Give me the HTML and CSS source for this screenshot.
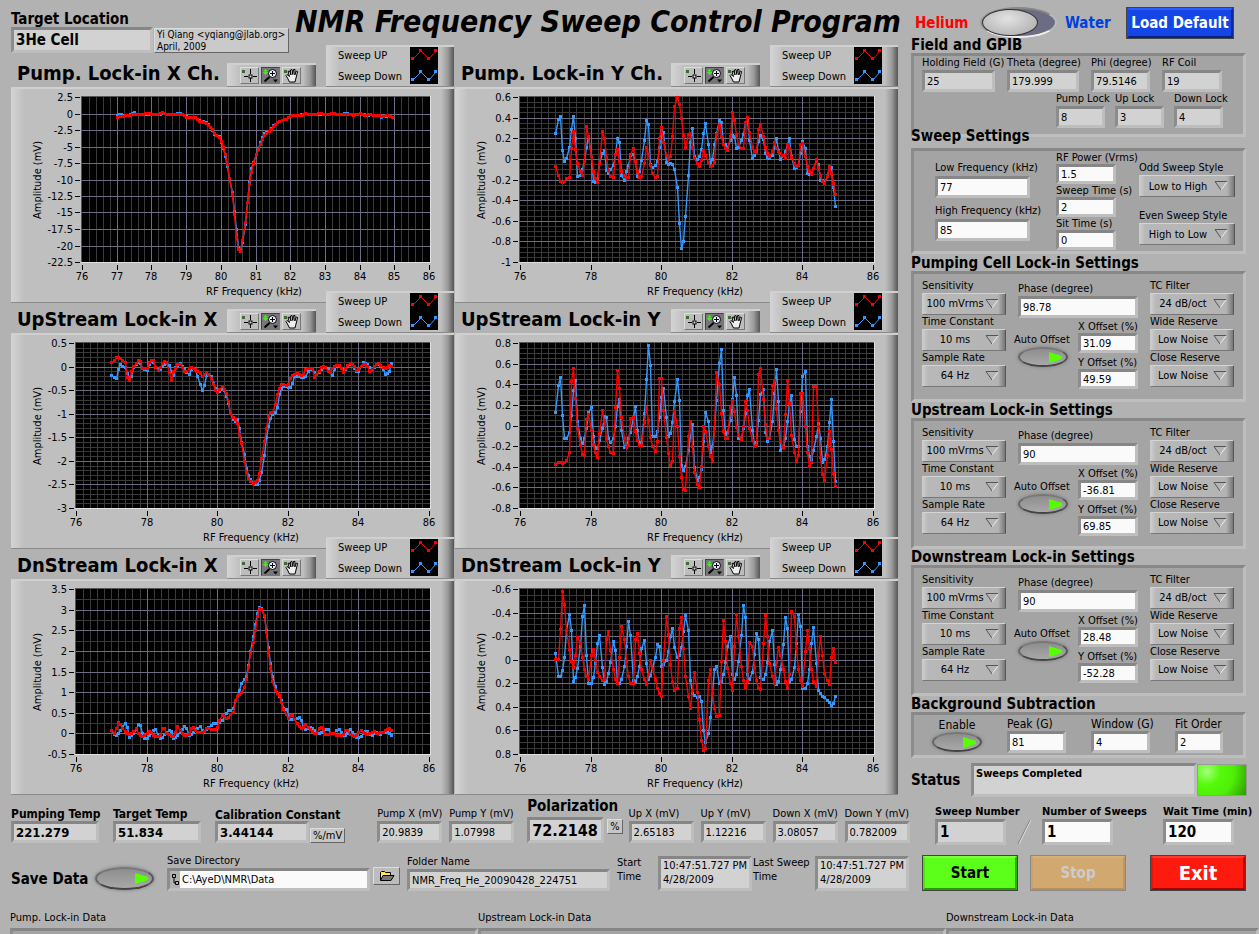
FILE: index.html
```html
<!DOCTYPE html>
<html lang="en">

<head>
  <meta charset="UTF-8" />
  <meta name="viewport" content="width=device-width, initial-scale=1.0" />
  <title>NMR Frequency Sweep Control Program</title>
  <link rel="stylesheet" href="styles.css">
</head>

<body>
  <svg class="sprite" aria-hidden="true">
    <symbol id="icon-cross" viewBox="0 0 17 15">
      <rect x="1" y="2" width="3" height="3" fill="#3f6a35" />
      <path d="M9.500 1v5M9.500 10v4M3 8.500h4M12 8.500h4" stroke="#000" fill="none" />
      <rect x="8" y="7" width="3" height="3" fill="#ddd" stroke="#000" />
    </symbol>
    <symbol id="icon-zoom" viewBox="0 0 17 15">
      <path d="M3.500 1v6M1 4.500h6M2 2l3 4M5 2l-3 4" stroke="#4be62c" fill="none" />
      <circle cx="10.500" cy="5.500" r="4" fill="#e8e8ff" stroke="#000" />
      <path d="M10.500 3v5M8 5.500h5" stroke="#000" fill="none" />
      <path d="M7.500 9l-5 4.500" stroke="#000" stroke-width="2" />
      <path d="M11 11.500h5l-2.500 3z" fill="#000" />
    </symbol>
    <symbol id="icon-hand" viewBox="1 1 17 15">
      <rect x="2" y="3" width="3" height="3" fill="#3f6a35" />
      <path d="M7.500 15l-2-4-1.500-2.500 1-1 2.500 2-1.500-5 1.500-.5 1.500 4-.5-5 1.500-.5.8 5 .7-5h1.500l-.2 5.500 1.500-4 1.300.5-1.600 6.500-1 4z" fill="#eee" stroke="#000" stroke-linejoin="round" />
    </symbol>
    <symbol id="icon-legend" viewBox="0 0 28 37">
      <rect width="28" height="37" fill="#000" />
      <path d="M3 12l8-8 8 8 7-8" stroke="#f00" fill="none" />
      <path d="M1 10h3v3h-3zM9 2h3v3h-3zM17 10h3v3h-3zM24 2h3v3h-3z" fill="#f00" />
      <path d="M3 33l8-8 8 8 7-8" stroke="#39f" fill="none" />
      <path d="M1 31h3v3h-3zM9 23h3v3h-3zM17 31h3v3h-3zM24 23h3v3h-3z" fill="#39f" />
    </symbol>
  </svg>

  <div class="page">
    <main class="left">
      <header class="top">
        <label class="field location">Target Location
          <input type="text" value="3He Cell" readonly />
        </label>
        <div class="author">Yi Qiang &lt;yqiang@jlab.org&gt;<br>April, 2009</div>
        <h1>NMR Frequency Sweep Control Program</h1>
      </header>

      <div class="charts" id="charts"></div>

      <div class="readouts">
        <label class="field strong w88">Pumping Temp <input type="text" value="221.279" readonly /></label>
        <label class="field strong w88">Target Temp <input type="text" value="51.834" readonly /></label>
        <label class="field strong calib">Calibration Constant <input type="text" value="3.44144" readonly /></label>
        <span class="unit">%/mV</span>
        <label class="field w65 pump">Pump X (mV) <input type="text" value="20.9839" readonly /></label>
        <label class="field w65">Pump Y (mV) <input type="text" value="1.07998" readonly /></label>
        <label class="field polar">Polarization <input type="text" value="72.2148" readonly /></label>
        <span class="unit percent">%</span>
        <label class="field w65">Up X (mV) <input type="text" value="2.65183" readonly /></label>
        <label class="field w65">Up Y (mV) <input type="text" value="1.12216" readonly /></label>
        <label class="field w65">Down X (mV) <input type="text" value="3.08057" readonly /></label>
        <label class="field w65">Down Y (mV) <input type="text" value="0.782009" readonly /></label>
      </div>

      <div class="save-row">
        <label class="save-data">Save Data <input type="checkbox" class="led big" checked /></label>
        <div class="path">
          <label for="saveDir">Save Directory</label>
          <div class="path-box">
            <svg width="10" height="17" viewBox="0 0 10 17" aria-hidden="true">
              <path d="M2.500 3.500h3v3h-3zM5.500 10.500h3v3h-3zM4 7v5h1" fill="none" stroke="#000" />
            </svg>
            <input type="text" id="saveDir" value="C:\AyeD\NMR\Data" />
          </div>
        </div>
        <button type="button" class="browse" aria-label="Browse">
          <svg width="16" height="12" viewBox="0 0 16 12" aria-hidden="true">
            <path d="M1.500 10V2.500l1-1h3l1 1h5V5" fill="#ffe94a" stroke="#000" />
            <path d="M1.500 10.500L4 5.500h11l-3 5z" fill="#777" stroke="#000" />
          </svg>
        </button>
        <label class="field folder">Folder Name <input type="text" value="NMR_Freq_He_20090428_224751" readonly /></label>
        <label class="time" for="startTime">Start<br>Time</label>
        <output class="stamp" id="startTime">10:47:51.727 PM<br>4/28/2009</output>
        <label class="time last" for="lastTime">Last Sweep<br>Time</label>
        <output class="stamp" id="lastTime">10:47:51.727 PM<br>4/28/2009</output>
      </div>
    </main>

    <aside class="right">
      <div class="mode">
        <label for="cellMode" class="helium">Helium</label>
        <input type="checkbox" id="cellMode" class="switch" />
        <label for="cellMode" class="water">Water</label>
        <button type="button" class="btn blue">Load Default</button>
      </div>

      <h2>Field and GPIB</h2>
      <section class="panel gpib">
        <div class="gpib-top">
          <label class="field">Holding Field (G) <input type="text" value="25" readonly /></label>
          <label class="field">Theta (degree) <input type="text" value="179.999" readonly /></label>
          <label class="field">Phi (degree) <input type="text" value="79.5146" readonly /></label>
          <label class="field">RF Coil <input type="text" value="19" readonly /></label>
        </div>
        <div class="gpib-locks">
          <label class="field">Pump Lock <input type="text" value="8" readonly /></label>
          <label class="field">Up Lock <input type="text" value="3" readonly /></label>
          <label class="field">Down Lock <input type="text" value="4" readonly /></label>
        </div>
      </section>

      <h2 class="overlap">Sweep Settings</h2>
      <section class="panel sweep">
        <div class="freqs">
          <label class="field">Low Frequency (kHz) <input type="text" value="77" /></label>
          <label class="field">High Frequency (kHz) <input type="text" value="85" /></label>
        </div>
        <div class="times">
          <label class="field">RF Power (Vrms) <input type="text" value="1.5" /></label>
          <label class="field">Sweep Time (s) <input type="text" value="2" /></label>
          <label class="field">Sit Time (s) <input type="text" value="0" /></label>
        </div>
        <div class="styles">
          <label class="field">Odd Sweep Style
            <select><option>Low to High</option><option>High to Low</option></select>
          </label>
          <label class="field">Even Sweep Style
            <select><option>High to Low</option><option>Low to High</option></select>
          </label>
        </div>
      </section>

      <div id="lockins"></div>

      <h2>Background Subtraction</h2>
      <section class="panel background">
        <label class="enable">Enable <input type="checkbox" class="led" checked /></label>
        <label class="field">Peak (G) <input type="text" value="81" /></label>
        <label class="field">Window (G) <input type="text" value="4" /></label>
        <label class="field">Fit Order <input type="text" value="2" /></label>
      </section>

      <div class="status">
        <h2>Status</h2>
        <output class="status-text">Sweeps Completed</output>
        <span class="status-light"></span>
      </div>

      <div class="run">
        <label class="field">Sweep Number <input type="text" value="1" readonly /></label>
        <svg class="slash" width="14" height="26" viewBox="0 0 14 26" aria-hidden="true">
          <path d="M1 25L13 1" stroke="#777" />
          <path d="M2 25L14 1" stroke="#ddd" />
        </svg>
        <label class="field">Number of Sweeps <input type="text" value="1" /></label>
        <label class="field wait">Wait Time (min) <input type="text" value="120" /></label>
      </div>

      <div class="actions">
        <button type="button" class="btn green">Start</button>
        <button type="button" class="btn tan" disabled>Stop</button>
        <button type="button" class="btn red">Exit</button>
      </div>
    </aside>
  </div>

  <footer class="data">
    <label>Pump. Lock-in Data <textarea readonly></textarea></label>
    <label>Upstream Lock-in Data <textarea readonly></textarea></label>
    <label>Downstream Lock-in Data <textarea readonly></textarea></label>
  </footer>

  <script src="panel.js"></script>
</body>

</html>
```
FILE: styles.css
```css
* {
  box-sizing: border-box;
}

body {
  margin: 0;
  overflow: hidden;
  background: #b2b2b2;
  color: #000;
  font-family: Tahoma, "DejaVu Sans Condensed", "DejaVu Sans", sans-serif;
  font-size: 11px;
  line-height: 14px;
}

h1,
h2,
h3 {
  margin: 0;
  font-weight: bold;
  white-space: nowrap;
}

h2 {
  position: relative;
  font-size: 15px;
  line-height: 16px;
}

input,
select,
button,
textarea {
  margin: 0;
  font: inherit;
  color: inherit;
}

.sprite {
  display: none;
}

.page {
  display: flex;
  padding: 0 3px 0 11px;
}

.left {
  flex: 1;
  min-width: 0;
}

.right {
  flex: 0 0 345px;
  margin-left: 2px;
}

/* label above a sunken box */
.field {
  display: block;
  white-space: nowrap;
}

.field input {
  display: block;
  width: 100%;
  height: 22px;
  padding: 0 2px;
}

input[type="text"],
.stamp,
.status-text,
.data textarea {
  border: 3px solid;
  border-color: #868686 #bebebe #bebebe #8c8c8c;
  border-radius: 0;
  background: #fafafa;
  outline: none;
}

input[readonly],
.stamp,
.status-text {
  background: #d2d2d2;
}

select {
  display: block;
  appearance: none;
  width: 84px;
  height: 22px;
  padding: 0 20px 0 2px;
  border: 1px solid;
  border-color: #d4d4d4 #555 #777 #ccc;
  border-radius: 0;
  text-align: center;
  background:
    url("data:image/svg+xml,%3Csvg xmlns='http://www.w3.org/2000/svg' width='14' height='10'%3E%3Cpath d='M13 1L7 9' stroke='%23eee'/%3E%3Cpath d='M13 .5H1L7 9' fill='none' stroke='%23555'/%3E%3C/svg%3E") no-repeat right 6px center,
    linear-gradient(90deg, #ccc 0, #b8b8b8 5px, #b4b4b4 calc(100% - 7px), #777 100%);
}

.w88 {
  width: 88px;
}

.w65 {
  width: 65px;
}

/* header */
.top {
  display: flex;
  height: 45px;
}

.location {
  flex: none;
  width: 142px;
  padding-top: 12px;
  font-size: 15px;
  line-height: 15px;
  font-weight: bold;
}

.location input {
  height: 26px;
}

.author {
  flex: none;
  height: 25px;
  width: 135px;
  margin: 28px 0 0 1px;
  padding: 0 2px;
  border: 1px solid;
  border-color: #ddd #666 #666 #ddd;
  background: #cacaca;
  font-size: 10px;
  line-height: 12px;
  white-space: nowrap;
}

.top h1 {
  margin: 3px 0 0 6px;
  font-size: 30px;
  line-height: 38px;
  font-style: italic;
}

/* charts */
.charts {
  display: grid;
  grid-template-columns: 1fr 1fr;
  column-gap: 1px;
  margin-right: 11px;
}

.chart + .chart + .chart {
  margin-top: -12px;
}

.chart-head {
  display: flex;
  align-items: flex-end;
  height: 42px;
  padding-left: 6px;
}

.chart-head h3 {
  flex: 0 0 210px;
  font-size: 20px;
  line-height: 28px;
}

.raised {
  border-top: 2px solid #d0d0d0;
  border-bottom: 1px solid #8a8a8a;
  background: linear-gradient(90deg, #d4d4d4 0, #c8c8c8 8px, #bfbfbf 13px, #bfbfbf calc(100% - 13px), #999 calc(100% - 6px), #555 100%);
}

.tools {
  display: flex;
  gap: 2px;
  width: 89px;
  height: 24px;
  padding: 2px 13px;
}

.tools button {
  width: 19px;
  height: 17px;
  padding: 0;
  border: 1px solid;
  border-color: #ddd #777 #777 #ddd;
  background: #bdbdbd;
}

.tools button.active {
  background: #777;
  border-color: #444 #777 #777 #444;
}

.tools svg {
  display: block;
  width: 17px;
  height: 15px;
}

.legend {
  position: relative;
  display: flex;
  justify-content: space-between;
  width: 128px;
  height: 42px;
  margin-left: auto;
  padding: 0 16px 0 12px;
}

.legend ul {
  margin: 0;
  padding: 0;
  list-style: none;
  line-height: 21px;
  margin-top: -2px;
}

.legend svg {
  width: 28px;
  height: 37px;
}

.plot {
  min-height: 216px;
}

.plot svg {
  display: block;
  width: 100%;
  margin-top: -2px;
}

.plot text {
  font-size: 11px;
}

/* bottom readouts */
.readouts {
  display: flex;
  align-items: flex-end;
  height: 48px;
}

.readouts > * {
  flex: none;
  margin-right: 7px;
}

.readouts .strong {
  margin-right: 14px;
  font-size: 12px;
  font-weight: bold;
}

.readouts .strong input {
  font-size: 13px;
}

.readouts .calib {
  width: 94px;
  margin-right: 1px;
  line-height: 12px;
}

.readouts .pump {
  margin-left: 25px;
}

.readouts .polar {
  width: 77px;
  margin: 0 3px 0 6px;
  font-size: 15px;
  line-height: 21px;
  font-weight: bold;
}

.readouts .polar input {
  height: 26px;
  font-size: 16px;
}

.unit {
  padding: 0 2px;
  border: 1px solid;
  border-color: #ddd #666 #666 #ddd;
  background: #c6c6c6;
  line-height: 13px;
}

.readouts .percent {
  margin: 0 6px 9px 0;
}

.save-row {
  display: flex;
  align-items: flex-end;
  height: 48px;
}

.save-row > * {
  flex: none;
}

.save-data {
  display: flex;
  align-items: center;
  justify-content: space-between;
  width: 143px;
  margin: 0 13px 1px 0;
  font-size: 15px;
  font-weight: bold;
}

.path {
  width: 203px;
}

.path-box {
  display: flex;
  height: 23px;
  border: 3px solid;
  border-color: #868686 #bebebe #bebebe #8c8c8c;
  background: #b2b2b2;
}

.path-box input {
  flex: 1;
  min-width: 0;
  border: 0;
  padding: 0 2px;
}

.browse {
  width: 27px;
  height: 18px;
  margin: 0 7px 6px 3px;
  padding: 0;
  border: 1px solid;
  border-color: #ddd #666 #666 #ddd;
  background: #bdbdbd;
}

.browse svg {
  display: block;
  margin: 0 auto;
}

.folder {
  width: 203px;
}

.time {
  width: 41px;
  margin-left: 7px;
  padding-bottom: 7px;
  white-space: nowrap;
}

.time.last {
  width: 62px;
  margin-left: 1px;
}

.stamp {
  width: 94px;
  height: 35px;
  padding: 0 2px;
  white-space: nowrap;
}

/* checkboxes */
.led {
  appearance: none;
  width: 50px;
  height: 20px;
  border: 2px solid;
  border-color: #777 #555 #444 #666;
  border-radius: 50%;
  background: linear-gradient(#8e8e8e, #a8a8a8);
  box-shadow: 0 0 3px 1px #8c8c8c;
}

.led:checked {
  background:
    url("data:image/svg+xml,%3Csvg xmlns='http://www.w3.org/2000/svg' width='14' height='11'%3E%3Cpath d='M0 0L13 4V7L0 11z' fill='%235f0'/%3E%3C/svg%3E") no-repeat right 3px center,
    linear-gradient(#8e8e8e, #a8a8a8);
}

.led.big {
  width: 59px;
  height: 23px;
}

.switch {
  appearance: none;
  width: 77px;
  height: 31px;
  border: 2px solid;
  border-color: #888 #bbb #eee #999;
  border-radius: 50%;
  background: #6c6c84;
}

.switch::before {
  content: "";
  display: block;
  width: 54px;
  height: 25px;
  border-radius: 50%;
  border: 1px solid #333;
  background: radial-gradient(ellipse at 45% 35%, #e2e2e2, #a8a8a8);
}

.switch:checked::before {
  margin-left: auto;
}

/* right column */
.mode {
  display: flex;
  align-items: center;
  height: 37px;
  padding: 8px 0 0 4px;
  font-size: 15px;
  font-weight: bold;
}

.mode > * {
  flex: none;
}

.helium {
  width: 65px;
  color: #f00;
}

.water {
  width: 69px;
  padding-left: 8px;
  color: #0040e0;
}

.btn {
  padding: 0;
  border: 3px solid;
  font-weight: bold;
  outline: 1px solid #444;
  outline-offset: -1px;
}

.blue {
  width: 108px;
  height: 32px;
  font-size: 15px;
  color: #fff;
  background: #1446e6;
  border-color: #2a5cff #0a2ba0 #082080 #1a48e0;
}

.panel {
  width: 335px;
  border: 3px solid;
  border-color: #888 #bebebe #bebebe #8c8c8c;
  background: #a4a4a4;
}

.gpib {
  height: 84px;
  padding: 0 8px;
}

.gpib-top {
  display: grid;
  grid-template-columns: 73px 72px 59px 60px;
  column-gap: 12px;
}

.gpib-locks {
  display: grid;
  grid-template-columns: 49px 49px 49px;
  column-gap: 10px;
  margin-left: 134px;
}

.overlap {
  margin: -9px 0 4px;
}

.sweep {
  display: flex;
  height: 106px;
  margin-bottom: 1px;
  padding-left: 21px;
}

.freqs {
  width: 95px;
  margin-right: 26px;
  padding-top: 9px;
}

.freqs .field {
  margin-bottom: 5px;
  line-height: 16px;
}

.times {
  width: 60px;
  margin-right: 23px;
}

.times .field {
  line-height: 13px;
}

.times input {
  height: 20px;
}

.styles {
  padding-top: 9px;
}

.styles .field {
  margin-bottom: 11px;
  line-height: 15px;
}

.styles select {
  width: 96px;
}

.lockin {
  display: flex;
  height: 131px;
  padding: 5px 8px 0;
}

.middle {
  width: 120px;
  margin: 3px 12px 0 12px;
}

.offsets {
  display: flex;
  justify-content: space-between;
  padding-top: 3px;
}

.auto {
  width: 50px;
  padding-top: 12px;
  white-space: nowrap;
}

.auto-text {
  display: block;
  margin: 0 -4px;
}

.offsets .field {
  width: 60px;
  margin-bottom: 4px;
  line-height: 12px;
}

.offsets .field input {
  height: 20px;
}

.background {
  display: flex;
  height: 46px;
  padding-top: 2px;
  font-size: 12px;
}

.enable {
  width: 50px;
  margin: 2px 25px 0 18px;
  text-align: center;
  line-height: 13px;
}

.enable .led {
  display: block;
}

.background .field {
  width: 59px;
  margin-right: 25px;
}

.background .field:last-child {
  width: 48px;
  margin: 0;
}

.background .field input {
  font-size: 11px;
}

.status {
  display: flex;
  align-items: center;
  height: 34px;
  margin-top: 5px;
}

.status h2 {
  width: 60px;
}

.status-text {
  width: 226px;
  height: 34px;
  padding: 1px 2px;
  font-weight: bold;
}

.status-light {
  width: 50px;
  height: 32px;
  border: 1px solid #999;
  background: radial-gradient(circle at 18% 22%, #a5ff80 0, #55fa0a 30%, #4fee08 60%, #2f9a00 100%);
}

.run {
  display: flex;
  align-items: flex-end;
  height: 48px;
  padding-left: 24px;
  font-weight: bold;
}

.run .field {
  width: 71px;
}

.run input {
  height: 26px;
  font-size: 15px;
}

.slash {
  margin: 0 11px;
}

.run .wait {
  margin-left: 50px;
}

.actions {
  display: flex;
  gap: 12px;
  padding: 10px 0 0 11px;
}

.actions .btn {
  width: 96px;
  height: 36px;
  font-size: 15px;
}

.actions .red {
  margin-left: 12px;
  font-size: 20px;
  color: #fff;
  background: #ff1a10;
  border-color: #ff3a30 #c00800 #a00000 #f01008;
}

.green {
  background: #5cff1a;
  border-color: #7cff3c #2fb000 #2a9a00 #50e010;
}

.actions .tan {
  color: #ccc;
  background: #d0a870;
  border-color: #d8b078 #bf9560 #b88f5c #cca06a;
  outline-color: #888;
}

.data {
  display: grid;
  grid-template-columns: 468fr 468fr 313fr;
  padding: 20px 0 0 10px;
}

.data textarea {
  display: block;
  width: 100%;
  height: 40px;
  margin-top: 3px;
  background: #a4a4a4;
  resize: none;
}
```
FILE: panel.js
```javascript
// Samples start at 77 kHz, one every 1/16 kHz.
// Values are integers, multiply by "unit" to get mV.
const START = 77;
const STEP = 0.0625;

const charts = [
  {
    title: 'Pump. Lock-in X Ch.', left: 71, unit: 0.1,
    x: { major: 1, minor: 0.2 },
    y: { top: 2.5, bottom: -22.5, major: 2.5 },
    up: [-6,-4,-4,-4,-3,-3,-2,0,0,-1,-1,-1,0,1,1,1,0,0,0,0,1,2,1,0,-1,-1,-1,0,0,0,-1,-3,-5,-5,-6,-6,-6,-9,-11,-12,-13,-14,-17,-20,-24,-29,-33,-35,-42,-50,-62,-77,-98,-122,-153,-187,-206,-209,-191,-164,-134,-107,-88,-75,-62,-54,-46,-38,-33,-30,-26,-23,-19,-16,-13,-11,-10,-9,-9,-6,-4,-3,-3,-3,-3,-2,0,1,0,-1,-1,-1,0,1,1,0,-1,-1,0,1,1,0,0,0,0,0,0,0,-1,-2,-1,0,1,-1,-2,-2,-1,-1,-2,-2,-3,-3,-4,-4,-3,-3,-4,-6],
    down: [-2,-1,-1,-2,-3,-2,0,1,2,0,-1,-1,0,0,0,0,0,0,0,0,0,1,1,0,-1,-1,-1,0,1,1,0,-2,-4,-5,-6,-6,-6,-8,-10,-11,-12,-13,-16,-21,-25,-31,-32,-34,-43,-52,-65,-80,-98,-119,-148,-175,-202,-207,-195,-168,-134,-104,-83,-73,-62,-52,-43,-36,-29,-28,-26,-22,-18,-16,-13,-11,-10,-9,-8,-6,-4,-2,-2,-3,-2,-1,0,1,0,-1,-1,-1,0,0,0,0,-1,-1,0,1,1,0,0,0,0,1,1,0,-1,-2,-1,0,1,0,-1,-3,-2,-1,-2,-2,-3,-3,-5,-4,-4,-3,-4,-5]
  },
  {
    title: 'Pump. Lock-in Y Ch.', left: 65, unit: 0.01,
    x: { major: 2, minor: 0.2 },
    y: { top: 0.6, bottom: -1, major: 0.2, minor: 0.05 },
    up: [-7,-16,-21,-22,-21,-19,-18,11,27,10,-4,-12,-16,-2,32,22,3,-12,-19,-22,-4,27,20,2,-11,-17,-18,5,10,-2,-12,-16,-18,-18,5,11,-2,-12,-18,-17,-4,12,5,-6,-14,-18,-17,20,31,16,4,0,3,22,51,60,53,40,23,12,24,25,12,1,-4,-7,-1,9,4,-3,-7,-6,-3,24,33,22,14,11,9,22,45,38,23,14,11,11,36,41,26,12,8,7,29,34,22,12,6,3,8,16,11,8,6,4,1,14,11,2,-4,-7,-6,14,15,3,-7,-12,-15,-9,0,-8,-16,-21,-23,-17,-7,-14,-23,-34],
    down: [25,39,42,9,-2,1,12,29,42,20,-17,-16,-10,-1,12,22,3,-21,-22,-19,-4,6,9,-11,-14,-10,-6,5,20,16,-16,-20,-12,-6,4,5,-2,-17,-12,-1,18,38,34,-5,-8,-6,-2,12,28,26,-3,-5,-4,-5,-10,-27,-62,-86,-80,-55,-16,16,30,3,0,3,10,25,35,14,-4,0,14,25,38,36,14,14,12,18,23,22,11,12,18,24,36,38,18,1,4,8,17,23,19,6,2,1,4,12,20,9,0,4,8,14,20,3,-9,-8,-6,6,17,11,-14,-15,-14,-9,-1,-5,-20,-20,-22,-17,-7,-8,-27,-46]
  },
  {
    title: 'UpStream Lock-in X', left: 65, unit: 0.01,
    x: { major: 2, minor: 0.2 },
    y: { top: 0.5, bottom: -3, major: 0.5, minor: 0.1 },
    up: [9,15,20,20,18,15,10,-22,-28,-10,2,8,13,11,-3,-4,-3,10,15,14,0,-8,0,8,11,9,-12,-28,-10,-3,5,5,0,-10,-10,-2,-1,-2,-6,-9,-14,-21,-15,-11,-15,-25,-38,-50,-53,-47,-42,-47,-57,-72,-99,-106,-111,-120,-142,-163,-201,-223,-236,-242,-246,-245,-240,-225,-193,-158,-130,-105,-97,-96,-80,-58,-45,-38,-36,-40,-38,-25,-18,-15,-14,-16,-18,-15,-6,-3,-2,-4,-23,-15,-10,0,1,0,-10,-12,-3,2,4,4,-2,-11,-4,4,7,6,1,-7,-6,1,5,5,2,-10,-8,1,6,7,3,0,-3,-1,4,2],
    down: [-17,-22,-25,-5,5,2,0,-14,-22,-21,0,6,9,8,-4,-6,-7,5,11,10,0,-5,-5,2,6,8,4,-10,-18,0,4,7,2,-4,-12,-15,-5,-3,-6,-20,-36,-49,-40,-18,-15,-20,-35,-45,-52,-52,-46,-50,-62,-78,-99,-112,-116,-112,-130,-160,-185,-215,-230,-238,-246,-250,-250,-240,-223,-188,-150,-127,-110,-100,-97,-85,-58,-46,-42,-42,-44,-43,-35,-20,-19,-20,-22,-23,-20,-10,-6,-4,-12,-16,-12,-5,0,-1,-4,-12,-17,-6,2,3,-2,-6,-6,2,6,5,-3,-10,-9,2,9,7,6,0,-7,0,5,6,2,-5,-15,-14,-9,7]
  },
  {
    title: 'UpStream Lock-in Y', left: 65, unit: 0.01,
    x: { major: 2, minor: 0.2 },
    y: { top: 0.8, bottom: -0.8, major: 0.2, minor: 0.05 },
    up: [-37,-35,-35,-36,-35,-33,-26,43,56,27,-2,-19,-28,-29,6,11,-4,-18,-26,-31,-7,15,4,-12,-20,-26,-27,18,54,36,8,-12,-21,-19,7,8,-5,-14,-19,-19,3,18,5,-11,-20,-25,-15,46,46,15,-11,-27,-38,-34,14,0,-30,-50,-62,-63,-10,4,-20,-45,-57,-60,-39,0,-5,-20,-30,-34,-2,52,40,12,-5,-12,-12,18,25,14,-1,-9,-13,0,24,15,-2,-14,-20,-19,50,56,26,1,-12,-12,39,44,17,-4,-15,-21,11,44,22,-9,-26,-34,-29,32,32,0,-26,-39,-35,38,38,-1,-31,-47,-53,-29,-5,-23,-46,-59],
    down: [13,39,47,10,-12,-12,-6,10,34,44,4,-12,-17,-12,-2,13,18,-10,-22,-22,-14,-2,9,8,-12,-16,-12,0,19,26,-4,-21,-20,-12,-6,8,19,-4,-17,-16,12,45,78,59,-10,-10,-5,8,28,36,8,-10,-7,3,24,45,25,-38,-43,-39,-24,-10,1,-40,-53,-50,-42,-15,13,4,-26,-20,-2,25,61,74,15,-8,-6,5,26,47,30,-12,-12,-2,12,30,35,-4,-18,-16,5,31,35,-6,-15,-12,4,32,55,24,-24,-20,-12,4,22,30,-13,-20,-20,14,48,53,-20,-30,-32,-24,-10,2,-12,-35,-32,-20,3,26,-15,-54]
  },
  {
    title: 'DnStream Lock-in X', left: 65, unit: 0.01,
    x: { major: 2, minor: 0.2 },
    y: { top: 3.5, bottom: -0.5, major: 0.5, minor: 0.25 },
    up: [7,0,14,28,22,12,5,0,-1,2,5,13,0,-3,-6,-5,0,5,3,-5,-7,-7,-5,12,12,2,-2,-6,-6,4,17,9,2,-4,-5,-2,14,15,8,4,3,3,6,14,14,10,10,10,15,32,45,42,38,40,46,52,80,91,95,100,112,132,160,195,222,250,284,304,301,287,245,198,158,128,106,98,94,75,60,46,38,44,45,34,25,18,14,15,22,16,10,6,2,0,12,15,10,-2,-2,0,2,0,-4,-5,-5,-2,8,8,-1,-4,-6,-4,4,7,3,2,-2,0,4,5,2,2,3,4,9,11,12,9],
    down: [7,-2,-3,2,8,18,24,15,-8,-5,0,10,22,21,0,-12,-10,-3,2,8,10,-5,-10,-8,-2,4,7,5,-10,-8,-3,4,10,17,12,-4,-2,4,10,14,17,8,4,10,16,20,24,25,25,28,32,42,50,56,56,62,80,90,105,122,132,140,165,200,235,265,293,306,303,285,250,210,170,140,115,98,90,80,62,60,45,36,34,34,38,39,32,15,10,12,16,14,8,2,2,3,8,10,10,0,0,2,8,10,4,-3,-3,2,10,4,-2,-8,-8,-6,0,5,5,-2,-3,0,4,2,-2,3,4,3,0,-5]
  },
  {
    title: 'DnStream Lock-in Y', left: 65, unit: 0.01,
    x: { major: 2, minor: 0.2 },
    y: { top: -0.6, bottom: 0.8, major: 0.2, minor: 0.05 },
    up: [-1,-1,-26,-58,-47,-25,-9,1,6,-4,-19,-14,-2,8,14,16,-4,-9,0,10,14,17,16,-18,-24,-8,8,16,20,-2,-29,-18,1,14,20,20,-18,-23,-6,8,16,21,12,0,7,16,24,28,31,0,-37,-22,4,19,26,24,-27,-36,-10,14,31,41,26,10,27,50,68,77,75,17,8,28,41,48,47,1,-34,-16,7,20,26,-12,-39,-20,5,17,23,18,-15,-12,6,17,24,25,-14,-38,-20,3,14,20,2,-11,-4,8,18,24,12,-41,-37,-10,8,17,22,-7,-25,-10,8,18,22,-4,-20,-4,11,17,21,-2,-10,2],
    down: [-6,14,14,9,-2,-25,-39,-25,18,15,7,-12,-37,-46,-4,20,20,15,3,-14,-21,6,21,18,11,2,-16,-8,20,20,16,5,-12,-33,-21,17,18,14,5,-10,-17,3,16,13,6,-2,-13,-12,5,4,0,-7,-20,-27,-11,-2,-4,-11,-24,-38,-25,17,28,30,32,31,35,60,70,62,49,28,8,5,20,18,12,2,-12,-20,12,16,12,1,-21,-46,-36,12,16,10,-5,-23,-18,15,16,12,2,-16,-25,4,21,18,8,-13,-36,-27,18,16,6,-14,-39,-29,24,24,20,8,-14,-28,3,26,28,31,32,34,36,38,37,31]
  }
];

const lockins = [
  { title: 'Pumping Cell Lock-in Settings', phase: '98.78', x: '31.09', y: '49.59' },
  { title: 'Upstream Lock-in Settings', phase: '90', x: '-36.81', y: '69.85' },
  { title: 'Downstream Lock-in Settings', phase: '90', x: '28.48', y: '-52.28' }
];

function plot(chart) {
  const left = chart.left;
  const right = 419;
  const top = 10;
  const bottom = 175;
  const { x, y } = chart;
  const px = f => Math.round(left + (f - 76) / 10 * (right - 1 - left));
  const py = v => Math.round(top + (v - y.top) / (y.bottom - y.top) * (bottom - top));
  const dir = y.bottom > y.top ? 1 : -1;
  const count = (axis, step) => Math.round(axis / step);

  let minor = '';
  let major = '';
  let ticks = '';
  let labels = '';

  for (let i = 1; i < count(10, x.minor); i++) {
    minor += `M${px(76 + i * x.minor)} ${top}V${bottom}`;
  }
  const span = Math.abs(y.bottom - y.top);
  if (y.minor) {
    for (let i = 1; i < count(span, y.minor); i++) {
      minor += `M${left} ${py(y.top + dir * i * y.minor)}H${right}`;
    }
  }
  for (let i = 0; i <= count(10, x.major); i++) {
    const f = 76 + i * x.major;
    if (f > 76 && f < 86) major += `M${px(f)} ${top}V${bottom}`;
    ticks += `M${px(f)} 178v5`;
    labels += `<text x="${px(f)}" y="193" text-anchor="middle">${f}</text>`;
  }
  for (let i = 0; i <= count(span, y.major); i++) {
    const v = Math.round((y.top + dir * i * y.major) * 100) / 100;
    if (v !== y.top && v !== y.bottom) major += `M${left} ${py(v)}H${right}`;
    ticks += `M${left - 2} ${py(v)}h-5`;
    labels += `<text x="${left - 9}" y="${py(v) + 4}" text-anchor="end">${v}</text>`;
  }

  const trace = (values, color) => {
    const pts = values.map((v, i) => [px(START + i * STEP), py(v * chart.unit)]);
    const line = pts.map(p => `${p[0] + 0.5},${p[1] + 0.5}`).join(' ');
    const dots = pts.map(p => `M${p[0] - 1} ${p[1] - 1}h3v3h-3z`).join('');
    return `<polyline points="${line}" fill="none" stroke="${color}" stroke-width="1.4" />
      <path d="${dots}" fill="${color}" shape-rendering="crispEdges" />`;
  };

  return `
    <svg viewBox="0 0 443 213" role="img" aria-label="${chart.title}">
      <rect x="${left - 1}" y="${top - 1}" width="${right - left + 2}" height="${bottom - top + 2}" fill="#e0e0e0" />
      <path d="M${left - 1} ${bottom}V${top - 1}H${right}V${bottom}z" fill="#555" />
      <rect x="${left}" y="${top}" width="${right - left}" height="${bottom - top}" fill="#000" />
      <g fill="none" shape-rendering="crispEdges">
        <path d="${minor}" stroke="#3a3a3a" />
        <path d="${major}" stroke="#6c6c84" />
        <path d="${ticks}" stroke="#000" />
      </g>
      ${trace(chart.down, '#39f')}
      ${trace(chart.up, '#f00')}
      ${labels}
      <text x="${(left + right) / 2 - 2}" y="208" text-anchor="middle">RF Frequency (kHz)</text>
      <text transform="translate(30 93) rotate(-90)" text-anchor="middle">Amplitude (mV)</text>
    </svg>`;
}

document.getElementById('charts').innerHTML = charts.map(chart => `
  <div class="chart">
    <div class="chart-head">
      <h3>${chart.title}</h3>
      <div class="tools raised">
        <button type="button" aria-label="Cursor"><svg><use href="#icon-cross" /></svg></button>
        <button type="button" class="active" aria-label="Zoom"><svg><use href="#icon-zoom" /></svg></button>
        <button type="button" aria-label="Pan"><svg><use href="#icon-hand" /></svg></button>
      </div>
      <div class="legend raised">
        <ul>
          <li>Sweep UP</li>
          <li>Sweep Down</li>
        </ul>
        <svg><use href="#icon-legend" /></svg>
      </div>
    </div>
    <div class="plot raised">${plot(chart)}</div>
  </div>`).join('');

function dropdown(label, value) {
  return `<label class="field">${label} <select><option>${value}</option></select></label>`;
}

document.getElementById('lockins').innerHTML = lockins.map(item => `
  <h2>${item.title}</h2>
  <section class="panel lockin">
    <div>
      ${dropdown('Sensitivity', '100 mVrms')}
      ${dropdown('Time Constant', '10 ms')}
      ${dropdown('Sample Rate', '64 Hz')}
    </div>
    <div class="middle">
      <label class="field">Phase (degree) <input type="text" value="${item.phase}" /></label>
      <div class="offsets">
        <label class="auto"><span class="auto-text">Auto Offset</span><input type="checkbox" class="led" checked /></label>
        <div>
          <label class="field">X Offset (%) <input type="text" value="${item.x}" /></label>
          <label class="field">Y Offset (%) <input type="text" value="${item.y}" /></label>
        </div>
      </div>
    </div>
    <div>
      ${dropdown('TC Filter', '24 dB/oct')}
      ${dropdown('Wide Reserve', 'Low Noise')}
      ${dropdown('Close Reserve', 'Low Noise')}
    </div>
  </section>`).join('');
```
